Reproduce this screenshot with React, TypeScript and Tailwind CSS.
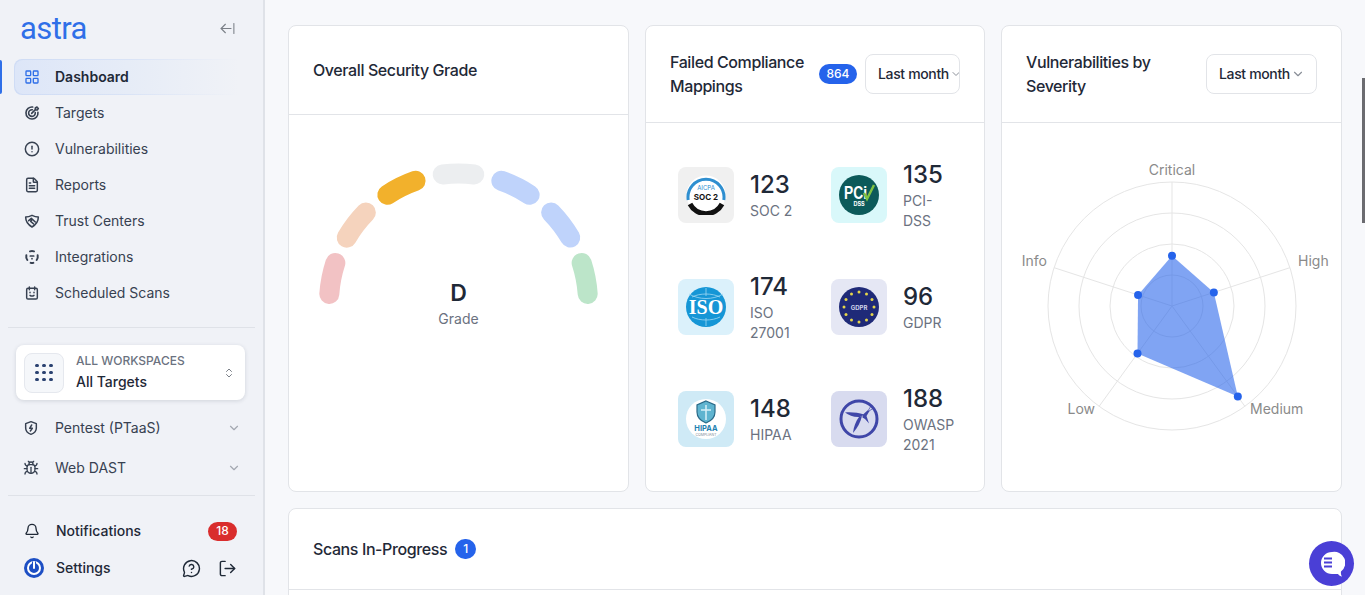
import React from "react";
import {
  ArrowLeftFromLine,
  Bell,
  Bug,
  ChevronDown,
  ChevronsUpDown,
  CircleAlert,
  FileText,
  LayoutGrid,
  LogOut,
  MessageCircleQuestion,
} from "lucide-react";

const font = { fontFamily: "Inter, 'Liberation Sans', sans-serif" };

const TargetIcon = () => (
  <svg width="16" height="16" viewBox="0 0 24 24" fill="none" stroke="currentColor" strokeWidth="2.4" strokeLinecap="round" strokeLinejoin="round">
    <path d="M13 3.100A9 9 0 1 0 20.900 11" />
    <path d="M12.500 7.100A5 5 0 1 0 16.900 11.500" />
    <path d="M11.500 12.500l5.500-5.500M17 7V4.500l2.500-1.500.5 1.500 1.500.5-1.500 2.500z" />
  </svg>
);

const ShieldHandIcon = () => (
  <svg width="16" height="16" viewBox="0 0 24 24" fill="none" stroke="currentColor" strokeWidth="2.300" strokeLinecap="round" strokeLinejoin="round">
    <path d="M2.500 6c3.500 0 6.500-1 9.500-2.500C15 5 18 6 21.500 6c0 6.500-3.500 11.500-9.500 15C6 17.500 2.500 12.500 2.500 6z" />
    <path d="M7 11.500l4-3.500 6 5.500M12.500 9.500l-2.500 3 4.500 4" />
  </svg>
);

const IntegrationIcon = () => (
  <svg width="16" height="16" viewBox="0 0 24 24" fill="none" stroke="currentColor" strokeWidth="3" strokeLinecap="round">
    <path d="M9 3.500a9 9 0 0 1 6 0" />
    <path d="M20.500 9.500a9 9 0 0 1-1.500 7" />
    <path d="M3.500 9.500a9 9 0 0 0 1.500 7" />
    <path d="M10 20.800a9 9 0 0 0 4 0" />
    <path d="M9.500 10.500h5M12 14.500v.01" strokeWidth="2.600" />
  </svg>
);

const CalendarIcon = () => (
  <svg width="16" height="16" viewBox="0 0 24 24" fill="none" stroke="currentColor" strokeWidth="2.200" strokeLinecap="round" strokeLinejoin="round">
    <rect x="4" y="5" width="16" height="16" rx="2" />
    <path d="M8 3v4M16 3v4" />
    <path d="M9 11v.5M15 11v.5M9 15.500c1.800 1.400 4.200 1.400 6 0" />
  </svg>
);

const ShieldBoltIcon = () => (
  <svg width="16" height="16" viewBox="0 0 24 24" fill="none" stroke="currentColor" strokeWidth="2.200" strokeLinecap="round" strokeLinejoin="round">
    <path d="M12 2.500l8 3v6.500c0 5-3.500 8-8 9.500-4.500-1.500-8-4.500-8-9.500V5.500z" />
    <path d="M13 7.500l-3 5h4l-3 4" />
  </svg>
);

const navItems = [
  { label: "Targets", icon: <TargetIcon /> },
  { label: "Vulnerabilities", icon: <CircleAlert size={16} strokeWidth={2.2} /> },
  { label: "Reports", icon: <FileText size={16} strokeWidth={2.2} /> },
  { label: "Trust Centers", icon: <ShieldHandIcon /> },
  { label: "Integrations", icon: <IntegrationIcon /> },
  { label: "Scheduled Scans", icon: <CalendarIcon /> },
];

const Sidebar = () => (
  <aside className="relative flex h-full w-[265px] shrink-0 flex-col border-r-2 border-[#dfe2e8] bg-[#f0f2f7]">
    <div className="flex h-[59px] items-center justify-between pl-[20px] pr-[27px] pb-[2px]">
      <span style={{ fontFamily: "Roboto, sans-serif" }} className="text-[31px] leading-none font-normal tracking-[-0.6px] text-[#2f6fe8]">
        astra
      </span>
      <ArrowLeftFromLine size={17} strokeWidth={1.5} className="text-[#7b8088]" />
    </div>
    <div className="absolute left-0 top-[60px] h-[34px] w-[2px] rounded-r bg-[#2f6fe8]" />
    <nav className="flex flex-col pl-[14px] pr-[24px]">
      <div className="rounded-l-lg bg-gradient-to-r from-[#cfdcf5] via-[#d9e3f6] to-[#f0f2f7] py-[1px] pl-[1px]">
        <div className="flex h-[34px] items-center gap-[15px] rounded-l-lg bg-gradient-to-r from-[#dde6f8] via-[#e6ecf7] to-[#f0f2f7] pl-[9px] text-sm font-semibold text-[#1f2937]">
          <LayoutGrid size={16} strokeWidth={2} className="text-[#2f6fe8]" />
          Dashboard
        </div>
      </div>
      {navItems.map((item) => (
        <div key={item.label} className="flex h-[36px] items-center gap-[15px] pl-[10px] text-sm text-[#374151]">
          <span className="text-[#374151]">{item.icon}</span>
          {item.label}
        </div>
      ))}
    </nav>
    <div className="mx-[8px] mt-[16px] border-t border-[#dfe2e8]" />
    <div className="ml-[16px] mr-[18px] mt-[17px] flex h-[55px] items-center rounded-lg bg-white pl-[8px] pr-[10px] shadow-[0_1px_4px_rgba(30,41,59,0.15)]">
      <div className="flex h-[40px] w-[40px] items-center justify-center rounded-lg border border-[#e5e8ee] bg-[#f5f7fa]">
        <div className="grid grid-cols-3 gap-[3.500px]">
          {Array.from({ length: 9 }).map((_, i) => (
            <span key={i} className="h-[3.500px] w-[3.500px] rounded-full bg-[#2a4170]" />
          ))}
        </div>
      </div>
      <div className="ml-[12px] flex flex-1 flex-col">
        <span className="text-xs leading-[16px] font-medium text-[#6b7280]">ALL WORKSPACES</span>
        <span className="mt-[3px] text-sm leading-[20px] font-medium text-[#1f2937]">All Targets</span>
      </div>
      <ChevronsUpDown size={12} className="text-[#7b8088]" />
    </div>
    <div className="mt-[8px] flex flex-col pl-[23px] pr-[22px]">
      <div className="flex h-[40px] items-center gap-[16px] text-sm text-[#374151]">
        <ShieldBoltIcon />
        <span className="flex-1">Pentest (PTaaS)</span>
        <ChevronDown size={14} className="text-[#a3a8b1]" />
      </div>
      <div className="flex h-[40px] items-center gap-[16px] text-sm text-[#374151]">
        <Bug size={16} strokeWidth={2} />
        <span className="flex-1">Web DAST</span>
        <ChevronDown size={14} className="text-[#a3a8b1]" />
      </div>
    </div>
    <div className="mx-[8px] mt-[7px] border-t border-[#dfe2e8]" />
    <div className="mt-[25px] flex h-[20px] items-center pl-[24px] pr-[26px] text-sm font-medium text-[#1f2937]">
      <Bell size={16} strokeWidth={2} />
      <span className="ml-[16px] flex-1">Notifications</span>
      <span className="flex h-[19px] w-[29px] items-center justify-center rounded-full bg-[#d92d2d] text-xs font-medium text-white">18</span>
    </div>
    <div className="mt-[17px] flex h-[20px] items-center pl-[24px] pr-[26px] text-sm font-medium text-[#1f2937]">
      <svg width="20" height="20" viewBox="0 0 20 20" fill="none">
        <circle cx="10" cy="10" r="10" fill="#1d4fc4" />
        <circle cx="10" cy="10" r="6" stroke="#fff" strokeWidth="2" />
        <path d="M10 3.500v6" stroke="#1d4fc4" strokeWidth="4" />
        <path d="M10 4v6" stroke="#fff" strokeWidth="2" strokeLinecap="round" />
      </svg>
      <span className="ml-[12px] flex-1">Settings</span>
      <MessageCircleQuestion size={19} strokeWidth={1.8} />
      <LogOut size={19} strokeWidth={1.8} className="ml-[17px]" />
    </div>
  </aside>
);

const Card = ({ children }: { children: React.ReactNode }) => (
  <div className="flex h-[467px] flex-col overflow-hidden rounded-lg border border-[#e2e4e8] bg-white">{children}</div>
);

const polar = (cx: number, cy: number, r: number, deg: number) => {
  const a = (deg * Math.PI) / 180;
  return [cx - r * Math.cos(a), cy - r * Math.sin(a)];
};

const segmentColors = ["#f2c2c4", "#f5d3bd", "#f2b12c", "#eceef0", "#bfd3fb", "#bfd3fb", "#bce5c9"];

const Gauge = () => (
  <div className="relative flex h-full justify-center pt-[38px]">
    <svg width="300" height="160" viewBox="0 0 300 160" fill="none">
      {segmentColors.map((color, i) => {
        const start = 4 + i * 26.33;
        const [x1, y1] = polar(149.5, 150, 129.5, start);
        const [x2, y2] = polar(149.5, 150, 129.5, start + 14);
        return (
          <path
            key={i}
            d={`M${x1} ${y1}A129.500 129.500 0 0 1 ${x2} ${y2}`}
            stroke={color}
            strokeWidth="20"
            strokeLinecap="round"
          />
        );
      })}
    </svg>
    <div className="absolute left-0 right-0 top-[162px] flex flex-col items-center">
      <span className="text-[23px] leading-[32px] font-semibold text-[#1f2937]">D</span>
      <span className="text-sm leading-[20px] text-[#6b7280]">Grade</span>
    </div>
  </div>
);

const Soc2Logo = () => (
  <svg width="40" height="40" viewBox="0 0 40 40">
    <circle cx="20" cy="20" r="19.500" fill="#fff" />
    <path d="M2.200 25A18 18 0 1 1 37.800 25" fill="none" stroke="#2f8fd0" strokeWidth="3" />
    <path d="M4 29A18 18 0 0 0 36 29" fill="none" stroke="#111" strokeWidth="5" />
    <text x="20" y="15" textAnchor="middle" fontSize="6" fill="#2f8fd0" fontFamily="Inter">AICPA</text>
    <text x="20" y="25" textAnchor="middle" fontSize="8" fontWeight="700" fill="#111" fontFamily="Inter">SOC 2</text>
  </svg>
);

const PciLogo = () => (
  <svg width="40" height="40" viewBox="0 0 40 40">
    <circle cx="20" cy="20" r="20" fill="#0c5a5a" />
    <text x="5" y="24" fontSize="19" fontWeight="700" fill="#fff" fontFamily="'Liberation Sans'" textLength="23" lengthAdjust="spacingAndGlyphs">PCi</text>
    <path d="M25 18l3 6 7-14" fill="none" stroke="#7ec242" strokeWidth="2.500" />
    <text x="20" y="31" textAnchor="middle" fontSize="5.500" fontWeight="700" fill="#fff" fontFamily="Inter">DSS</text>
  </svg>
);

const IsoLogo = () => (
  <svg width="40" height="40" viewBox="0 0 40 40">
    <circle cx="20" cy="20" r="20" fill="#1596d6" />
    <path d="M6 10c8-4 20-4 28 0M6 30c8 4 20 4 28 0M3 7c10 6 24 6 34 0M20 1v8M20 31v8" fill="none" stroke="#9fd8f2" strokeWidth="0.800" />
    <text x="20" y="26.500" textAnchor="middle" fontSize="20" fontWeight="700" fill="#fff" fontFamily="'Liberation Serif'">ISO</text>
  </svg>
);

const GdprLogo = () => (
  <svg width="40" height="40" viewBox="0 0 40 40">
    <circle cx="20" cy="20" r="20" fill="#1f2a78" />
    {Array.from({ length: 12 }).map((_, i) => {
      const a = (i * 30 * Math.PI) / 180;
      return <circle key={i} cx={20 + 15 * Math.cos(a)} cy={20 + 15 * Math.sin(a)} r="1.500" fill="#e6d64a" />;
    })}
    <text x="20" y="22.500" textAnchor="middle" fontSize="6" fontWeight="700" fill="#cfd3ea" fontFamily="Inter">GDPR</text>
  </svg>
);

const HipaaLogo = () => (
  <svg width="40" height="40" viewBox="0 0 40 40">
    <circle cx="20" cy="20" r="20" fill="#fff" />
    <path d="M20 2l9 4v7c0 5-4 9-9 11-5-2-9-6-9-11V6z" fill="#5fb4d0" stroke="#2a6a88" strokeWidth="1.200" />
    <path d="M20 6v15M15 11h10" stroke="#d8f0f8" strokeWidth="1.500" />
    <text x="20" y="31.500" textAnchor="middle" fontSize="7.500" fontWeight="700" fill="#1f7fb0" fontFamily="Inter">HIPAA</text>
    <text x="20" y="36.500" textAnchor="middle" fontSize="3.500" fill="#7b8a96" fontFamily="Inter">COMPLIANT</text>
  </svg>
);

const OwaspLogo = () => (
  <svg width="40" height="40" viewBox="0 0 40 40" fill="none">
    <circle cx="20" cy="20" r="18" stroke="#3f46a8" strokeWidth="3" />
    <path d="M6 13.500C12 13 19 13.500 25 15.500L21 18C15 18.500 10 16.500 6 13.500z" fill="#3f46a8" />
    <path d="M23 17C21.500 23 18.500 29 14 34C14.500 28 17 22 20 18z" fill="#3f46a8" />
    <path d="M23.500 16L29 11L30.500 12L27.500 17L30 24.500L26 20L23.500 18.500z" fill="#3f46a8" />
    <path d="M29.500 11L32 7M30 12L34 9.500" stroke="#3f46a8" strokeWidth="0.700" />
  </svg>
);

const compliance = [
  { value: "123", label: "SOC 2", bg: "bg-[#f0f0f0]", logo: <Soc2Logo /> },
  { value: "135", label: "PCI-DSS", bg: "bg-[#d9f8fa]", logo: <PciLogo /> },
  { value: "174", label: "ISO 27001", bg: "bg-[#dbf1fb]", logo: <IsoLogo /> },
  { value: "96", label: "GDPR", bg: "bg-[#e5e7f4]", logo: <GdprLogo /> },
  { value: "148", label: "HIPAA", bg: "bg-[#cfeaf6]", logo: <HipaaLogo /> },
  { value: "188", label: "OWASP 2021", bg: "bg-[#d8dbef]", logo: <OwaspLogo /> },
];

const Compliance = () => (
  <div className="grid grid-cols-[153px_153px] gap-y-[56px] pl-[32px] pt-[44px]">
    {compliance.map((c) => (
      <div key={c.label} className="flex h-[56px] items-center gap-[16px]">
        <div className={`flex h-[56px] w-[56px] shrink-0 items-center justify-center rounded-lg ${c.bg}`}>{c.logo}</div>
        <div className="w-[54px]">
          <div className="text-2xl leading-[32px] font-medium text-[#1f2937]">{c.value}</div>
          <div className="text-sm leading-[20px] text-[#6b7280]">{c.label}</div>
        </div>
      </div>
    ))}
  </div>
);

const radarPoints: [number, number][] = [
  [0, 50.3],
  [72, 44],
  [144, 112],
  [216, 58.7],
  [288, 35.7],
];

const radarXY = (deg: number, r: number) => {
  const a = (deg * Math.PI) / 180;
  return [170 + r * Math.sin(a), 160 - r * Math.cos(a)];
};

const radarLabels = [
  { text: "Critical", x: 170, y: 29, anchor: "middle" },
  { text: "High", x: 296, y: 120, anchor: "start" },
  { text: "Medium", x: 248, y: 268, anchor: "start" },
  { text: "Low", x: 93, y: 268, anchor: "end" },
  { text: "Info", x: 45, y: 120, anchor: "end" },
];

const Radar = () => (
  <div className="flex justify-center pt-[23px]">
    <svg width="340" height="300" viewBox="0 0 340 300" fill="none" className="shrink-0">
      {[31, 62, 93, 124].map((r) => (
        <circle key={r} cx="170" cy="160" r={r} stroke="#e5e5e5" />
      ))}
      {radarPoints.map(([deg]) => {
        const [x, y] = radarXY(deg, 124);
        return <line key={deg} x1="170" y1="160" x2={x} y2={y} stroke="#e5e5e5" />;
      })}
      <polygon
        points={radarPoints.map(([d, r]) => radarXY(d, r).join(",")).join(" ")}
        fill="#2563eb"
        fillOpacity="0.58"
      />
      {radarPoints.map(([d, r]) => {
        const [x, y] = radarXY(d, r);
        return <circle key={d} cx={x} cy={y} r="4" fill="#2563eb" />;
      })}
      {radarLabels.map((l) => (
        <text key={l.text} x={l.x} y={l.y} textAnchor={l.anchor as "start"} fontSize="14" fill="#8a8a8a" fontFamily="Inter">
          {l.text}
        </text>
      ))}
    </svg>
  </div>
);

const Dropdown = ({ className, chevron }: { className: string; chevron: number }) => (
  <div className={`flex h-[40px] shrink-0 items-center overflow-hidden rounded-lg border border-[#e2e4e8] bg-white pl-[12px] text-sm font-medium tracking-tight text-[#1f2937] ${className}`}>
    <span className="whitespace-nowrap">Last month</span>
    <ChevronDown size={chevron} className="ml-[1px] shrink-0 text-[#8a8f98]" />
  </div>
);

export default function App() {
  return (
    <div style={font} className="flex h-[595px] w-[1365px] overflow-hidden bg-[#f7f8fb]">
      <Sidebar />
      <main className="relative flex-1 overflow-hidden pl-[23px] pr-[23px] pt-[25px]">
        <div className="grid grid-cols-[341px_340px_341px] gap-x-[16px]">
          <Card>
            <div className="flex h-[89px] shrink-0 items-center border-b border-[#e2e4e8] px-[24px] text-base font-medium tracking-tight text-[#1f2937]">
              Overall Security Grade
            </div>
            <div className="flex-1">
              <Gauge />
            </div>
          </Card>
          <Card>
            <div className="flex h-[97px] shrink-0 items-center border-b border-[#e2e4e8] pl-[24px] pr-[24px]">
              <div className="w-[149px] text-base leading-[24px] font-medium tracking-tight text-[#1f2937]">Failed Compliance Mappings</div>
              <span className="flex h-[20px] w-[38px] items-center justify-center rounded-full bg-[#2563eb] text-xs font-medium text-white">864</span>
              <Dropdown className="ml-[8px] w-[95px]" chevron={12} />
            </div>
            <Compliance />
          </Card>
          <Card>
            <div className="flex h-[97px] shrink-0 items-center justify-between border-b border-[#e2e4e8] pl-[24px] pr-[24px]">
              <div className="w-[150px] text-base leading-[24px] font-medium tracking-tight text-[#1f2937]">Vulnerabilities by Severity</div>
              <Dropdown className="w-[111px]" chevron={14} />
            </div>
            <Radar />
          </Card>
        </div>
        <div className="mt-[16px] h-[300px] rounded-lg border border-[#e2e4e8] bg-white">
          <div className="flex h-[81px] items-center gap-[8px] border-b border-[#e2e4e8] px-[24px] text-base font-medium tracking-tight text-[#1f2937]">
            Scans In-Progress
            <span className="flex h-[20px] w-[21px] items-center justify-center rounded-full bg-[#2563eb] text-xs font-medium text-white">1</span>
          </div>
        </div>
        <div className="absolute right-[11px] bottom-[9px] flex h-[45px] w-[45px] items-center justify-center rounded-full bg-[#4a3fd6]">
          <svg width="26" height="26" viewBox="0 0 26 26">
            <path d="M13 1a11 11 0 1 0 0 22h6c1 1.500 2.500 2.500 4 2.500-1-1.200-1.300-3-1-5A11 11 0 0 0 13 1z" fill="#fff" />
            <path d="M5 7.500h8M5 11.500h8M5 15.500h8" stroke="#4a3fd6" strokeWidth="2" />
          </svg>
        </div>
        <div className="absolute right-0 top-[78px] h-[145px] w-[3px] bg-[#6b6b70]" />
      </main>
    </div>
  );
}
